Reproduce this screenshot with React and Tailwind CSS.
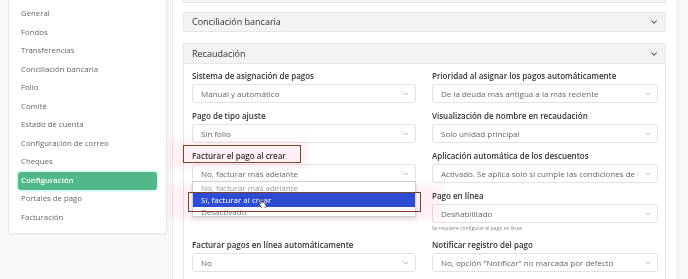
import { ChevronDown } from 'lucide-react'

const menu = [
  'General',
  'Fondos',
  'Transferencias',
  'Conciliación bancaria',
  'Folio',
  'Comité',
  'Estado de cuenta',
  'Configuración de correo',
  'Cheques',
  'Configuración',
  'Portales de pago',
  'Facturación',
]

function Select({ value }) {
  return (
    <div className="h-[19px] flex items-center justify-between rounded-[3px] border border-[#e2e2e2] bg-white pl-[8px] pr-[5px]">
      <span className="text-[8px] text-[#666] whitespace-nowrap overflow-hidden mr-[6px]">{value}</span>
      <ChevronDown className="w-[8px] h-[8px] text-[#999] shrink-0" strokeWidth={2} />
    </div>
  )
}

function Field({ label, value, help }) {
  return (
    <div className="flex flex-col">
      <div className="h-[12px] flex items-center text-[8px] font-semibold text-[#333] whitespace-nowrap">{label}</div>
      <div className="mt-[2px]">
        <Select value={value} />
      </div>
      {help && <div className="mt-[2px] text-[5px] text-[#888] leading-[7px]">{help}</div>}
    </div>
  )
}

export default function App() {
  return (
    <div className="w-[688px] h-[279px] overflow-hidden bg-[#f8f8f8] flex relative" style={{ fontFamily: '"Open Sans", "Liberation Sans", sans-serif' }}>
      {/* Sidebar */}
      <div className="w-[172px] shrink-0 pl-[8px] pr-[5px]">
        <div className="bg-white border border-t-0 border-[#e8e8e8] rounded-b-[3px] shadow-[0_1px_2px_rgba(0,0,0,0.06)] pt-[5px] pb-[6px] px-[9px]">
          {menu.map((m) => (
            <div
              key={m}
              className={
                m === 'Configuración'
                  ? 'h-[18.5px] flex items-center pl-[3px] rounded-[3px] bg-[#51b889] text-white font-semibold text-[7.8px] shadow-[0_0_0_2px_#defcf8]'
                  : 'h-[18.5px] flex items-center pl-[3px] text-[7.8px] text-[#666]'
              }
            >
              {m}
            </div>
          ))}
        </div>
      </div>

      {/* Main panel */}
      <div className="w-[506px] shrink-0 bg-white border-x border-[#ebebeb] pl-[10px] pr-[11px]">
        <div className="h-[3px] bg-[#f3f3f3] border-x border-b border-[#e6e6e6]" />
        <div className="mt-[9px] h-[20px] bg-[#f3f3f3] border border-[#e6e6e6] rounded-[2px] flex items-center justify-between pl-[8px] pr-[6px]">
          <span className="text-[9px] text-[#333]">Conciliación bancaria</span>
          <ChevronDown className="w-[10px] h-[10px] text-[#444]" strokeWidth={2.5} />
        </div>
        <div className="mt-[11px] border border-[#e6e6e6] rounded-t-[2px] h-[260px]">
          <div className="h-[20px] bg-[#f3f3f3] border-b border-[#e6e6e6] flex items-center justify-between pl-[8px] pr-[6px]">
            <span className="text-[9px] text-[#333]">Recaudación</span>
            <ChevronDown className="w-[10px] h-[10px] text-[#444]" strokeWidth={2.5} />
          </div>
          <div className="pl-[8px] pr-[7px] pt-[6px] grid grid-cols-[224px_226px] gap-x-[16px] gap-y-[7px] relative">
            <Field label="Sistema de asignación de pagos" value="Manual y automático" />
            <Field label="Prioridad al asignar los pagos automáticamente" value="De la deuda más antigua a la más reciente" />
            <Field label="Pago de tipo ajuste" value="Sin folio" />
            <Field label="Visualización de nombre en recaudación" value="Solo unidad principal" />
            <Field label="Facturar el pago al crear" value="No, facturar más adelante" />
            <Field label="Aplicación automática de los descuentos" value="Activado. Se aplica solo si cumple las condiciones de f" />
            <div />
            <Field label="Pago en línea" value="Deshabilitado" help="Se requiere configurar el pago en línea" />
            <Field label="Facturar pagos en línea automáticamente" value="No" />
            <Field label="Notificar registro del pago" value={'No, opción "Notificar" no marcada por defecto'} />
          </div>
        </div>
      </div>

      {/* Annotation glows */}
      <div className="absolute left-[168px] top-[139px] w-[140px] h-[30px] bg-[#ffe4ee] opacity-50 blur-[3px] mix-blend-multiply pointer-events-none" />
      <div className="absolute left-[168px] top-[184px] w-[275px] h-[36px] bg-[#ffe4ee] opacity-50 blur-[3px] mix-blend-multiply pointer-events-none" />

      {/* Dropdown list */}
      <div className="absolute left-[192px] top-[181px] w-[224px] h-[36px] bg-white border border-[#cfcfcf] shadow-[0_2px_4px_rgba(0,0,0,0.12)] text-[8px]">
        <div className="h-[11px] flex items-center pl-[8px] text-[#999]">No, facturar más adelante</div>
        <div className="h-[14px] flex items-center pl-[8px] bg-[#2d4bd3] text-white">Sí, facturar al crear</div>
        <div className="h-[9px] flex items-center pl-[8px] text-[#777]">Desactivado</div>
      </div>

      {/* Annotation boxes */}
      <div className="absolute left-[183px] top-[145px] w-[118px] h-[18px] border-[1.5px] border-[#7a4225] pointer-events-none" />
      <div className="absolute left-[188px] top-[192px] w-[233px] h-[20px] border-[1.5px] border-[#7a4225] pointer-events-none" />

      {/* Cursor */}
      <svg className="absolute left-[258px] top-[196px]" width="10" height="12" viewBox="0 0 10 12">
        <path d="M3 1.2c.5 0 .9.4.9.9v4l.3-.1c.5-.2 1 0 1.1.4l.1.2c.4-.2.9 0 1.1.4.4-.1.9.1 1 .6l.6 2.4c.2.9-.2 1.6-1 1.9l-1.8.6c-.6.2-1.3 0-1.7-.5L1.3 8.1c-.3-.4-.2-.9.2-1.1.3-.2.8-.1 1 .2l.5.6V2.1c0-.5.4-.9 1-.9z" fill="#fff" stroke="#222" strokeWidth="0.7" />
      </svg>
    </div>
  )
}
